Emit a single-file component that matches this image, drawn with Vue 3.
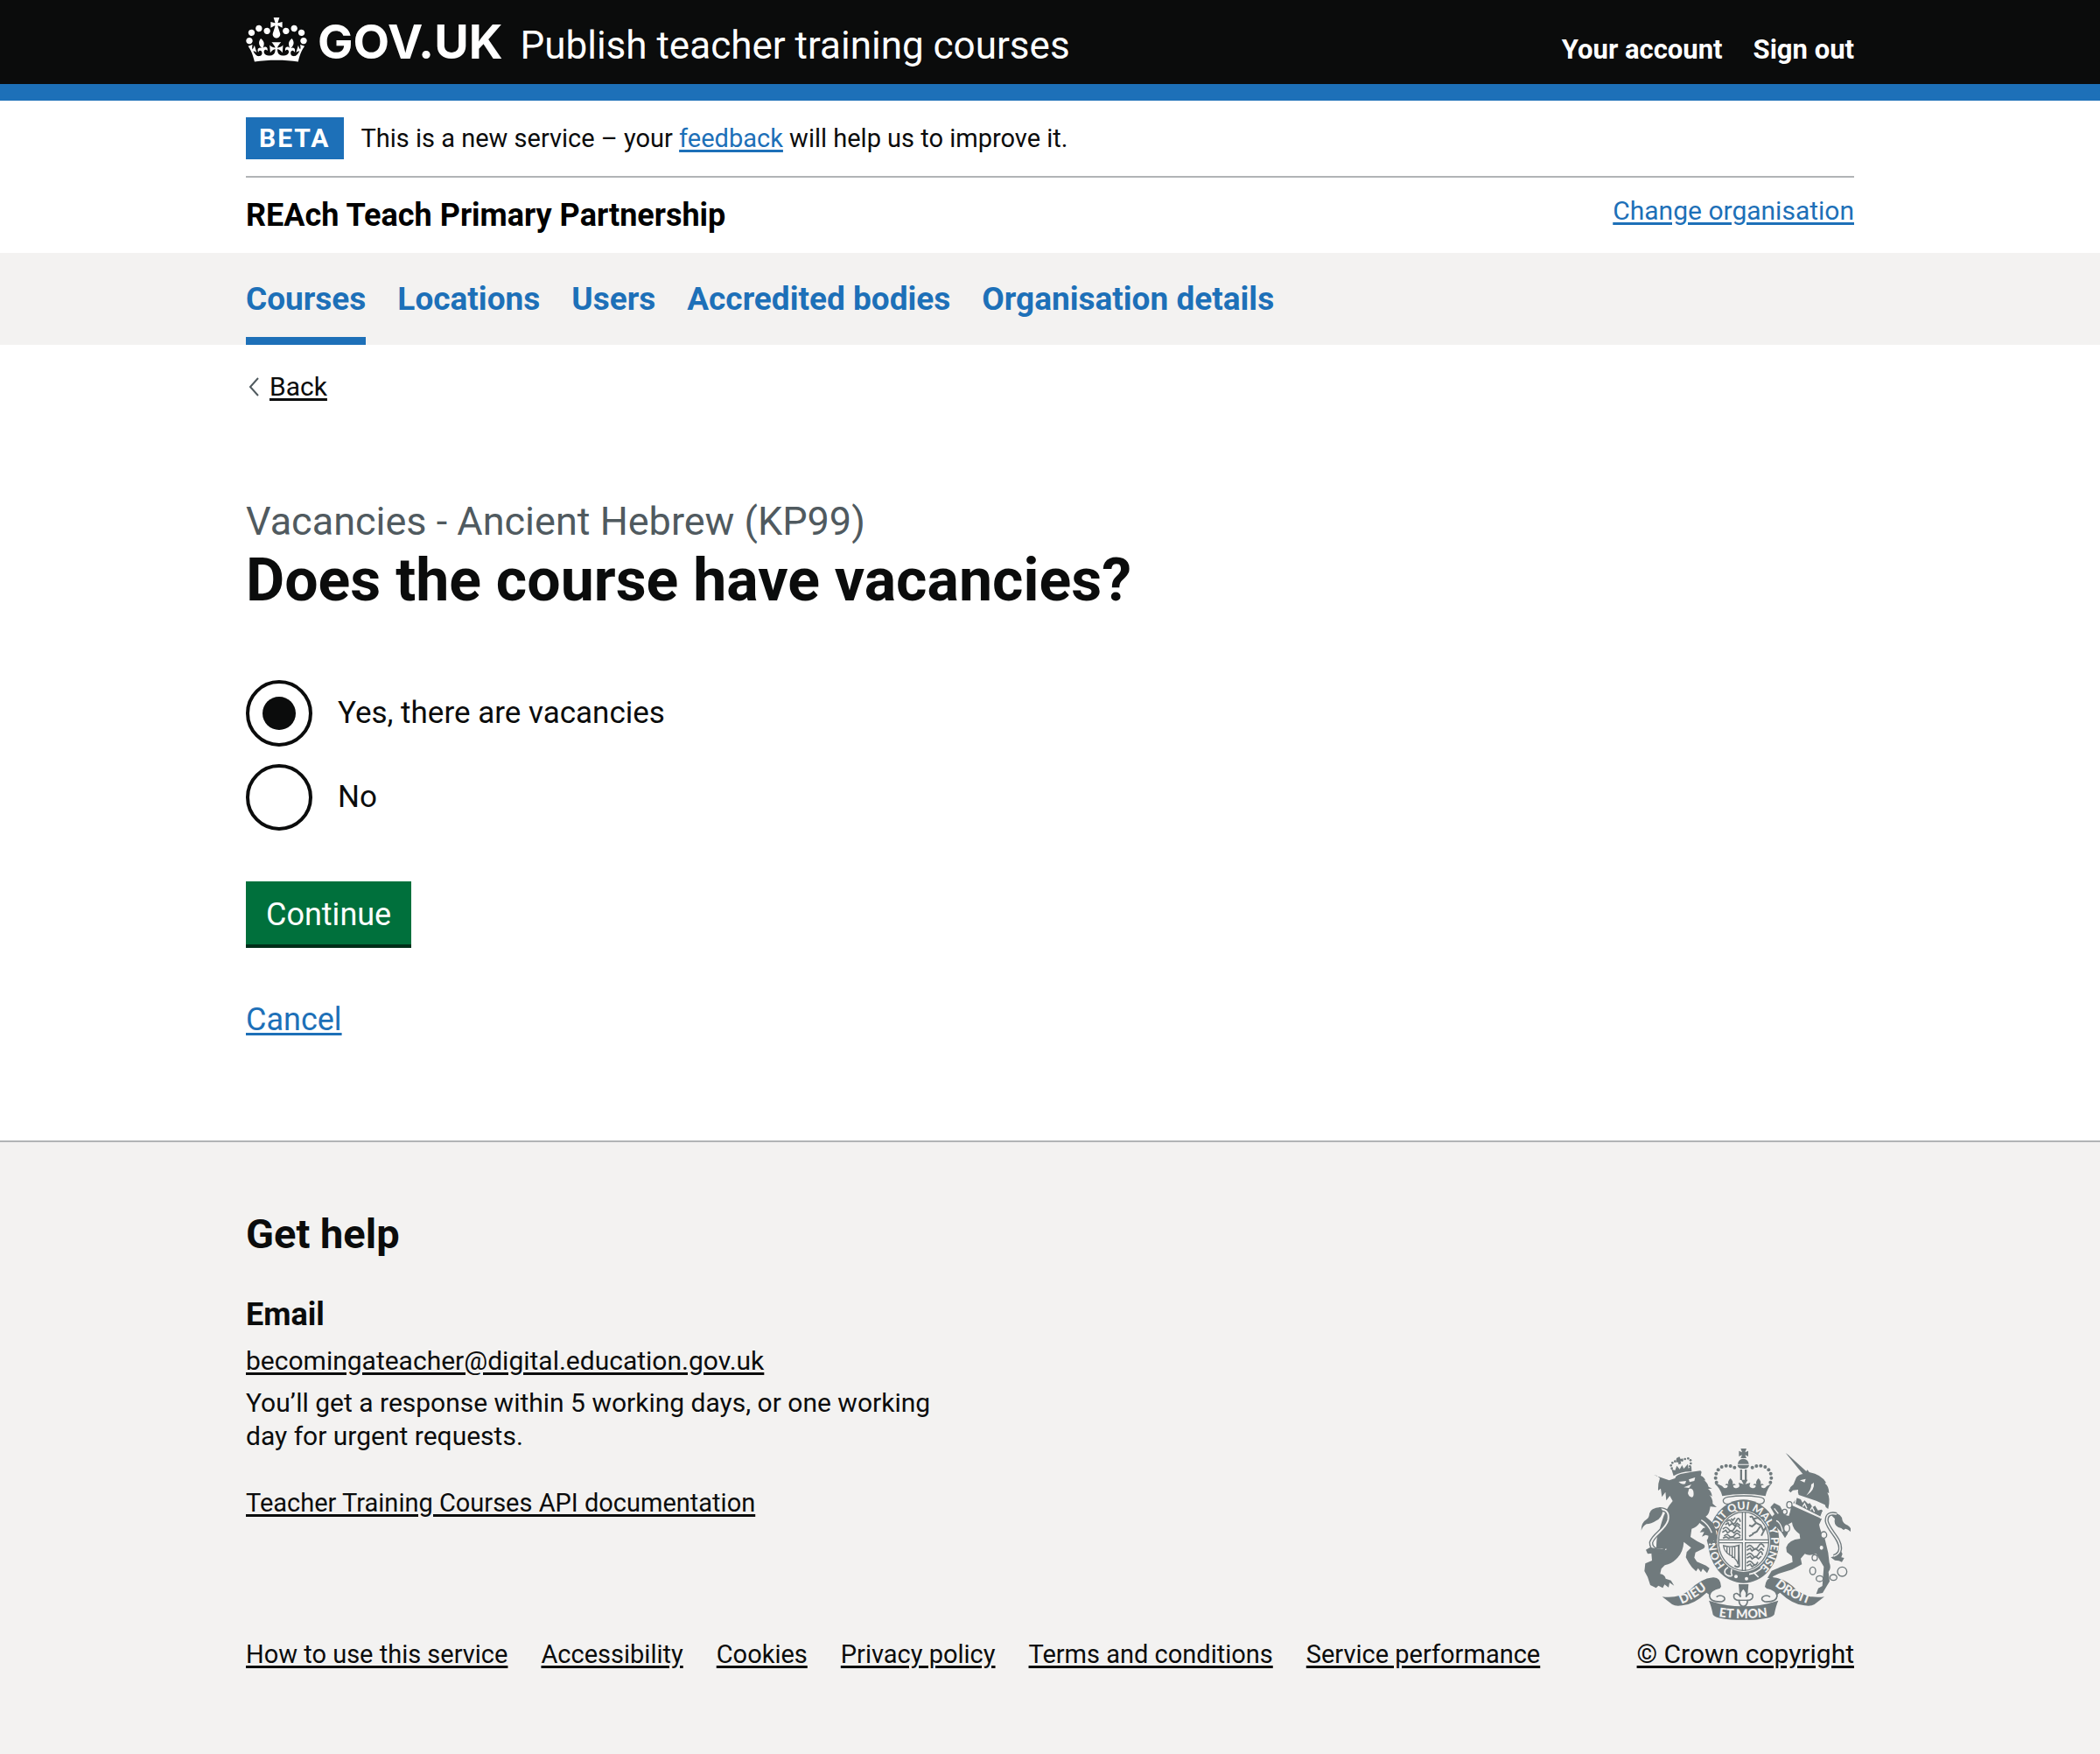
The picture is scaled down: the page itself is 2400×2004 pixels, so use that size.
<script setup>
import { ref } from 'vue'

const vacancies = ref('yes')

const navigation = [
  { label: 'Courses', current: true },
  { label: 'Locations', current: false },
  { label: 'Users', current: false },
  { label: 'Accredited bodies', current: false },
  { label: 'Organisation details', current: false },
]

const footerLinks = [
  'How to use this service',
  'Accessibility',
  'Cookies',
  'Privacy policy',
  'Terms and conditions',
  'Service performance',
]

const crownPearls = [
  [300, 161], [297, 146], [299, 131], [306, 118], [318, 108], [333, 104], [348, 105], [362, 110],
  [485, 161], [488, 146], [486, 131], [479, 118], [467, 108], [452, 104], [437, 105], [423, 110],
]

const lionCrownPearls = [
  [147, 113], [144, 103], [149, 94], [158, 89], [167, 88], [182, 85], [192, 81], [203, 79], [211, 85], [212, 96], [209, 106],
]

const chainLinks = [
  [550, 238, 9, 11], [534, 262, 8, 9], [541, 318, 10, 13], [668, 341, 10, 11], [660, 385, 8, 9], [637, 419, 9, 10],
  [630, 464, 10, 13], [654, 491, 12, 10], [701, 487, 12, 10], [731, 467, 16, 16],
]
</script>

<template>
  <div class="page">
    <header class="header">
      <div class="container header-row">
        <a class="logo" href="#">
          <svg class="crown" viewBox="0 0 132 97" aria-hidden="true">
            <path fill="currentColor" fill-rule="evenodd" d="M25 30.2c3.5 1.5 7.7-.2 9.1-3.7 1.5-3.6-.2-7.8-3.9-9.2-3.6-1.4-7.6.3-9.1 3.9-1.4 3.5.3 7.5 3.9 9zM9 39.5c3.6 1.5 7.8-.2 9.2-3.7 1.5-3.6-.2-7.8-3.9-9.1-3.6-1.5-7.6.2-9.1 3.8-1.4 3.5.3 7.5 3.8 9zM4.4 57.2c3.5 1.5 7.7-.2 9.1-3.8 1.5-3.6-.2-7.7-3.9-9.1-3.5-1.5-7.6.3-9.1 3.8-1.4 3.5.3 7.6 3.9 9.1zm38.3-21.4c3.5 1.5 7.7-.2 9.1-3.8 1.5-3.6-.2-7.7-3.9-9.1-3.6-1.5-7.6.3-9.1 3.8-1.3 3.6.4 7.7 3.9 9.1zm64.4-5.6c-3.6 1.5-7.8-.2-9.1-3.7-1.5-3.6.2-7.8 3.8-9.2 3.6-1.4 7.7.3 9.2 3.9 1.3 3.5-.4 7.5-3.9 9zm15.9 9.3c-3.6 1.5-7.7-.2-9.1-3.7-1.5-3.6.2-7.8 3.7-9.1 3.6-1.5 7.7.2 9.2 3.8 1.5 3.5-.3 7.5-3.8 9zm4.7 17.7c-3.6 1.5-7.8-.2-9.2-3.8-1.5-3.6.2-7.7 3.9-9.1 3.6-1.5 7.7.3 9.2 3.8 1.3 3.5-.4 7.6-3.9 9.1zM89.3 35.8c-3.6 1.5-7.8-.2-9.2-3.8-1.4-3.6.2-7.7 3.9-9.1 3.6-1.5 7.7.3 9.2 3.8 1.4 3.6-.3 7.7-3.9 9.1zM69.7 17.7l8.9 4.7V9.3l-8.9 2.8c-.2-.3-.5-.6-.9-.9L72.4 0H59.6l3.5 11.2c-.3.3-.6.5-.9.9l-8.8-2.8v13.1l8.8-4.7c.3.3.6.7.9.9l-5 15.4v.1c-.2.8-.4 1.6-.4 2.4 0 4.1 3.1 7.5 7 8.1h.2c.3 0 .7.1 1 .1.4 0 .7 0 1-.1h.2c4-.6 7.1-4.1 7.1-8.1 0-.8-.1-1.7-.4-2.4V34l-5.1-15.4c.4-.2.7-.6 1-.9zM66 92.8c16.9 0 32.8 1.1 47.1 3.2 4-16.9 8.9-26.7 14-33.5l-9.6-3.4c1 4.9 1.1 7.2 0 10.2-1.5-1.4-3-4.3-4.2-8.7L108.6 76c2.8-2 5-3.2 7.5-3.3-4.4 9.4-10 11.9-13.6 11.2-4.3-.8-6.3-4.6-5.6-7.9 1-4.7 5.7-5.9 8-.5 4.3-8.7-3-11.4-7.6-8.8 7.1-7.2 7.9-13.5 2.1-21.1-8 6.1-8.1 12.3-4.5 20.8-4.7-5.4-12.1-2.5-9.5 6.2 3.4-5.2 7.9-2 7.2 3.1-.6 4.3-6.4 7.8-13.5 7.2-10.3-.9-10.9-8-11.2-13.8 2.5-.5 7.1 1.8 11 7.3L80.2 60c-4.1 4.4-8 5.3-12.3 5.4 1.4-4.4 8-11.6 8-11.6H55.5s6.4 7.2 7.9 11.6c-4.2-.1-8-1-12.3-5.4l1.4 16.4c3.9-5.5 8.5-7.7 10.9-7.3-.3 5.8-.9 12.8-11.1 13.8-7.2.6-12.9-2.9-13.5-7.2-.7-5 3.8-8.3 7.1-3.1 2.7-8.7-4.6-11.6-9.4-6.2 3.7-8.5 3.6-14.7-4.6-20.8-5.8 7.6-5 13.9 2.2 21.1-4.7-2.6-11.9.1-7.7 8.8 2.3-5.5 7.1-4.2 8.1.5.7 3.3-1.3 7.1-5.7 7.9-3.5.7-9-1.8-13.5-11.2 2.5.1 4.7 1.3 7.5 3.3l-4.7-15.4c-1.2 4.4-2.7 7.2-4.3 8.7-1.1-3-.9-5.3 0-10.2l-9.5 3.4c5 6.9 9.9 16.7 14 33.5 14.8-2.1 30.8-3.2 47.7-3.2z" />
          </svg>
          <span class="logo-text">GOV.UK</span>
        </a>
        <a class="service-name" href="#">Publish teacher training courses</a>
        <nav class="account" aria-label="Account">
          <a href="#">Your account</a>
          <a href="#">Sign out</a>
        </nav>
      </div>
    </header>

    <div class="container">
      <div class="phase-banner">
        <strong class="tag">BETA</strong>
        <span class="phase-text">This is a new service – your <a class="link" href="#">feedback</a> will help us to improve it.</span>
      </div>
      <div class="organisation">
        <span class="organisation-name">REAch Teach Primary Partnership</span>
        <a class="link organisation-change" href="#">Change organisation</a>
      </div>
    </div>

    <nav class="primary-nav" aria-label="Primary">
      <ul class="container nav-list">
        <li v-for="item in navigation" :key="item.label">
          <a class="nav-link" :class="{ current: item.current }" :aria-current="item.current ? 'page' : null" href="#">{{ item.label }}</a>
        </li>
      </ul>
    </nav>

    <div class="container">
      <a class="back" href="#">
        <svg class="back-arrow" viewBox="0 0 12 22" aria-hidden="true">
          <path d="M11 1 2 11l9 10" fill="none" stroke="#505a5f" stroke-width="2" />
        </svg>
        <span>Back</span>
      </a>

      <main class="main">
        <form @submit.prevent>
          <fieldset class="fieldset">
            <legend>
              <span class="caption">Vacancies - Ancient Hebrew (KP99)</span>
              <h1 class="heading">Does the course have vacancies?</h1>
            </legend>
            <div class="radios">
              <div class="radio">
                <input id="vacancies-yes" v-model="vacancies" type="radio" name="vacancies" value="yes">
                <label for="vacancies-yes">Yes, there are vacancies</label>
              </div>
              <div class="radio">
                <input id="vacancies-no" v-model="vacancies" type="radio" name="vacancies" value="no">
                <label for="vacancies-no">No</label>
              </div>
            </div>
          </fieldset>
          <button class="button" type="submit">Continue</button>
        </form>
        <p class="cancel"><a class="link" href="#">Cancel</a></p>
      </main>
    </div>

    <footer class="footer">
      <div class="container footer-row">
        <div class="footer-main">
          <h2 class="footer-title">Get help</h2>
          <h3 class="footer-subtitle">Email</h3>
          <ul class="help-list">
            <li><a href="#">becomingateacher@digital.education.gov.uk</a></li>
            <li>You’ll get a response within 5 working days, or one working day for urgent requests.</li>
          </ul>
          <p class="api-link"><a href="#">Teacher Training Courses API documentation</a></p>
          <ul class="footer-links">
            <li v-for="label in footerLinks" :key="label"><a href="#">{{ label }}</a></li>
          </ul>
        </div>

        <a class="copyright" href="#">
          <svg class="crest" viewBox="40 42 720 594" aria-hidden="true">
            <defs>
              <path id="garter" d="M330 445A94 110 0 1 1 456 445" />
              <path id="motto-left" d="M180 578Q232 558 278 516" />
              <path id="motto-mid" d="M308 621Q392 634 482 619" />
              <path id="motto-right" d="M500 514Q546 556 624 580" />
            </defs>

            <!-- crown -->
            <g class="ink">
              <path d="M383 45h20l-5 13 11-5v19l-11-5 5 11h-20l5-11-11 5V53l11 5zM373 98q2-17 19-18 17 1 19 18zM372 101h40q-2 13-16 13h-8q-14 0-16-13zM381 117h7v36h-7zM397 117h7v36h-7z" />
              <circle v-for="([x, y], i) in crownPearls" :key="i" :cx="x" :cy="y" r="6" />
              <path d="M303 166l16 7q6 8 12 8 8-1 8-8-3-4-9-2 1-7 11-4-4-9 7-20 11 11 7 20 10-3 11 4-6-2-9 2 2 8 12 8 7-1 10-7l-3-12 17 5-8-15h22l-8 15 17-5-3 12q3 6 10 7 10 0 12-8-3-4-9-2 1-7 11-4-4-9 7-20 11 11 7 20 10-3 11 4-6-2-9 2 0 7 8 8 6 0 12-8l16-7q-15 16-21 42-74-14-148 0-6-26-26-42z" />
              <path d="M340 211q53-8 106 0 20 3 18 14-3 11-20 10-51-12-102 0-17 1-19-10-1-11 17-14z" fill="#f3f2f1" stroke="#707a7d" stroke-width="4" />
            </g>

            <!-- garter and shield -->
            <ellipse class="ink" cx="393" cy="363" rx="122" ry="143" />
            <ellipse class="paper" cx="393" cy="363" rx="91" ry="105" />
            <ellipse class="ink-line" cx="393" cy="363" rx="86" ry="100" stroke-width="4" />
            <path class="ink-line" stroke-width="4" d="M389 264v94H308M399 264v94h80M389 464v-96H308M399 464v-96h80" />
            <g class="ink-line" stroke-width="5">
              <path d="M334 297q10-14 18 0t16-4 14 3M330 306l10-6 4 9 10-7 9 8 8-9 10 8M350 285l6 6 8-9M322 322q10-14 20 0t20-4 20 3M320 332l12-7 6 9 12-8 10 8 10-9 12 8M326 346q8-12 18-1t18-3 20 3M322 352l12-4 8 5 12-6 10 6 18-4" />
              <path d="M404 384q10-14 20 0t20-4 20 3M404 394l12-7 6 9 12-8 10 8 10-9 8 8M404 411q10-14 20 0t20-4 14 3M404 421l12-7 6 9 12-8 10 8 10-9M404 438q10-14 20 0t18-4M404 448l12-7 6 9 12-8" />
            </g>
            <path class="ink-line" stroke-width="6" d="M414 280q10-6 12 6l10 14 16 8 10 20-8 16M436 300l-14 12-10-4M450 312l-12 18-16 8M428 286l14-4 10 8M462 328l8-14M412 346l14-8" />
            <path class="ink-line" stroke-width="4" d="M324 378q26 8 54-2l-4 66q-4-20-28-32-20-12-22-32zM336 384v20M345 384v28M354 384v36M363 382v44" />
            <path class="ink-line" stroke-width="6" d="M376 376l2 72q-8 6-16-2" />
            <circle class="paper" cx="367" cy="484" r="6" />
            <circle class="paper" cx="403" cy="491" r="6" />
            <path class="paper-line" stroke-width="5" d="M340 452q-16 8-10 22 8 10 22 8M352 458q-4 12 2 24M412 476q26-4 46-24M430 472l14 14" />
            <text class="motto" font-size="37"><textPath href="#garter">HONI SOIT QUI MAL Y PENSE</textPath></text>

            <!-- lion -->
            <g class="ink">
              <circle v-for="([x, y], i) in lionCrownPearls" :key="i" :cx="x" :cy="y" r="4" />
              <path d="M163 78l10-5 4 8 8-2v10l-8-1 2 9-9 3-1-9-7 1v-9zM146 116l12 4 6-16 10 12 8-14 6 12 14-16 2 15 10-7 1 18q-32-2-62 15z" />
              <path d="M138 154l20-7q4-14 32-17 30-6 55-9l4 4-3 13q14 6 16 17l-6-2q14 9 17 23l12 6-14 1q12 8 14 26l-9-5q12 13 11 30l14 12-22-2-3 14q-3 14-13 20l25 22 9 22 5 28-4 26-8-16-6 15-8-8-4 12-5-20 9-14-13-4-13 6 8-16-15 1 11-14 8-2-20-16q-8 14-27 20l-4 28q22 16 46 26 6 6 0 13l-29 14-4 18 9 14 31 13 12 9-8 17-15-15-6 12-10-14-7 11-14-14-10-14-11-20 3-18 15-15-25-20q-2 36-25 58-18 18-40 22l-12 12-4 18q16 2 19 16l18 6 11 18-16-10-3 16-14-10-6 12-15-8-8 8-20-10-9-28-11-20 3-26 23-10-2-24 17-20q-1-34 10-60l9-30q12-42 37-70l-10-18-12 16-3-29-12 17-4-29-9 7q-1-24 6-42l-10-9-11-2z" />
            </g>
            <path class="paper" d="M170 159l26-3-3 10q-12 4-23-7zM205 151l22-7-3 12-16 4zM206 183q11-4 15 9 3 20-6 20-10-2-13-14zM188 178l26-10-8 12z" />
            <path class="paper-line" stroke-width="4" d="M248 290q26 16 36 44" />
            <path class="ink-line" stroke-width="14" d="M104 253q38 0 30 38c-10 34-48 46-58 76q0 34 52 22" />
            <path class="paper-line" stroke-width="6" d="M104 253q38 0 30 38c-10 34-48 46-58 76q0 34 52 22" />
            <path class="ink" d="M42 326q0-28 18-38 10-6 10-20 4-20 38-22l8 14q-4 22-22 32-18 12-34 12-12 6-18 22zM58 392l14-8 40 6 18-8-12 20-18 2-20 10 4-10-20 2z" />

            <!-- unicorn -->
            <g class="ink">
              <path d="M537 60l9 7 66 60-12 10z" />
              <path d="M550 186q2-10 14-18l10-24q10-12 26-12l12-14 6 8q42 8 58 36l-4 2q14 10 14 34l-6-2q12 20 3 56l-8-6-3-8-30-14-60-20q-4-10-2-18l-18 2-8 8-7-8 8-6z" />
              <path d="M575 214l14 5 6 12 7-8 12 12 6-3 10 14 8-5 10 16 12-3 4 4-5 24-96-50zM559 240l102 46-9 20q4 24 19 46l12 50 4 34q8 20-3 32l4 32-24 40-22 4 7-20 14-8 5-66-26-44q-26 8-39 0l-14 16 4 20-34 18-46 14-20 10 4 8-22-4 14-24 38-16 34-14-2-20-18-14-2-16q8-26 48-30l-2-16q-24-16-26-40l-22 12 8 26-10 16-12-20-30-30-4-22 10-10-14-24 13-14 20 10 16 30 14 4q6-16 8-34z" />
              <path d="M760 330q-20-16-22-6-4 0-10-6-28-6-22-32l-12-12 6-8q30 0 32 26 4 12 18 16 14 8 10 22zM692 418l20-6 14-16 6 10-4 12 10 2-8 14-10-4-14-2z" />
            </g>
            <path class="ink-line" stroke-width="13" d="M712 270q-36-8-34 24c6 32 50 62 46 96q-2 18-22 24" />
            <path class="paper-line" stroke-width="5" d="M712 270q-36-8-34 24c6 32 50 62 46 96q-2 18-22 24" />
            <path class="paper" d="M586 154l20-5-4 12zM634 162q4 26-26 44 18-22 17-38z" />
            <path class="paper-line" stroke-width="4" d="M569 236l92 46M574 212l-6 26M664 262l-8 22M596 244l6-10 8 16M622 256l6-10 8 16" />
            <path class="paper-line" stroke-width="4" d="M505 292q16 6 22 38M498 250l14 18" />
            <g class="chain">
              <ellipse v-for="([x, y, rx, ry], i) in chainLinks" :key="i" :cx="x" :cy="y" :rx="rx" :ry="ry" />
            </g>

            <!-- scroll -->
            <g class="ink">
              <path d="M114 553q56 8 96-24 36-38 78-42 26-2 28 32l-34 32-16-12q-42 40-84 44-22 4-34-4zM670 553q-56 8-96-24-36-38-78-42-26-2-30 32l36 32 16-12q42 40 84 44 22 4 34-4z" />
              <path d="M274 566q118 40 238 0-8 18-14 48-14 18-106 18t-104-18q-6-30-14-48z" />
              <path d="M376 510h34l-3 34h-28z" />
            </g>
            <path d="M312 522q-36 8-36 28 2 22 42 20 16-6 8-16-14-10-26 0M472 522q36 8 36 28-2 22-42 20-16-6-8-16 14-10 26 0" fill="#f3f2f1" stroke="#707a7d" stroke-width="5" />
            <path d="M392 524q16 14 9 30 12-20 23-8 4 18-18 20v6q-4 14-14 14t-14-14v-6q-22-2-18-20 11-12 23 8-7-16 9-30z" fill="#f3f2f1" stroke="#707a7d" stroke-width="5" />
            <path class="ink-line" stroke-width="4" d="M376 565h32" />
            <g class="motto" font-size="43">
              <text><textPath href="#motto-left">DIEU</textPath></text>
              <text><textPath href="#motto-mid">ET MON</textPath></text>
              <text><textPath href="#motto-right">DROIT</textPath></text>
            </g>
          </svg>
          <span>© Crown copyright</span>
        </a>
      </div>
    </footer>
  </div>
</template>

<style>
html {
  background: #f3f2f1;
}

body {
  margin: 0;
}
</style>

<style scoped>
.page {
  background: #fff;
  color: #0b0c0c;
  font-family: Roboto, "Liberation Sans", sans-serif;
  font-size: 30px;
  line-height: 38px;
}

.container {
  box-sizing: border-box;
  width: calc(100% - 60px);
  max-width: 1838px;
  margin: 0 auto;
}

ul {
  margin: 0;
  padding: 0;
  list-style: none;
}

a {
  color: inherit;
  text-decoration-thickness: 3px;
  text-underline-offset: 3px;
}

.link {
  color: #1d70b8;
}

.header {
  background: #0b0c0c;
  border-bottom: 19px solid #1d70b8;
  color: #fff;
}

.header-row {
  display: flex;
  align-items: baseline;
  padding: 20px 0 11px;
  line-height: 56px;
}

.header a {
  text-decoration: none;
}

.logo {
  display: flex;
  align-items: flex-start;
  gap: 12px;
}

.crown {
  width: 70px;
  height: 51px;
}

.logo-text {
  align-self: baseline;
  font-family: Inter, "Liberation Sans", sans-serif;
  font-size: 54px;
  font-weight: 700;
}

.service-name {
  margin-left: 20px;
  font-size: 44px;
}

.account {
  display: flex;
  gap: 35px;
  margin-left: auto;
  font-size: 31px;
  font-weight: 700;
}

.phase-banner {
  display: flex;
  align-items: center;
  gap: 20px;
  padding: 19px 0;
  border-bottom: 2px solid #b1b4b6;
}

.phase-text {
  font-size: 29px;
}

.tag {
  padding: 5px 15px;
  background: #1d70b8;
  color: #fff;
  letter-spacing: 2px;
}

.organisation {
  display: flex;
  justify-content: space-between;
  padding: 23px 0;
}

.organisation-name {
  color: #000;
  font-size: 36px;
  font-weight: 700;
  line-height: 40px;
}

.organisation-change {
  line-height: 30px;
}

.primary-nav {
  background: #f3f2f1;
}

.nav-list {
  display: flex;
  gap: 36px;
}

.nav-link {
  display: block;
  padding: 33px 0 23px;
  border-bottom: 9px solid transparent;
  color: #1d70b8;
  font-size: 37px;
  font-weight: 700;
  line-height: 40px;
  text-decoration: none;
}

.nav-link.current {
  border-color: #1d70b8;
}

.back {
  display: inline-flex;
  align-items: center;
  gap: 12px;
  margin-top: 29px;
  padding-left: 3px;
  text-decoration: none;
}

.back span {
  text-decoration: underline 3px;
  text-underline-offset: 3px;
}

.back-arrow {
  width: 12px;
  height: 22px;
}

.main {
  padding: 105px 0 114px;
}

.fieldset {
  margin: 0;
  padding: 0;
  border: 0;
}

.fieldset legend {
  padding: 0;
}

.caption {
  display: block;
  color: #505a5f;
  font-size: 45px;
  line-height: 58px;
}

.heading {
  margin: 0;
  font-size: 68px;
  font-weight: 700;
  line-height: 76px;
}

.radios {
  display: flex;
  flex-direction: column;
  gap: 20px;
  margin: 76px 0 58px;
  font-size: 35px;
  line-height: 48px;
}

.radio {
  display: flex;
  align-items: center;
  gap: 29px;
}

.radio input {
  display: grid;
  place-content: center;
  width: 76px;
  height: 76px;
  margin: 0;
  border: 4px solid #0b0c0c;
  border-radius: 50%;
  appearance: none;
}

.radio input:checked::before {
  width: 38px;
  height: 38px;
  border-radius: 50%;
  background: #0b0c0c;
  content: "";
}

.button {
  padding: 12px 23px;
  border: 0;
  background: #00703c;
  box-shadow: inset 0 -4px 0 #002d18;
  color: #fff;
  font-family: inherit;
  font-size: 36px;
  line-height: 52px;
}

.cancel {
  margin: 58px 0 0;
  font-size: 36px;
  line-height: 48px;
}

.footer {
  border-top: 2px solid #b1b4b6;
  background: #f3f2f1;
}

.footer-row {
  display: flex;
  align-items: flex-end;
  justify-content: space-between;
  padding: 76px 0 95px;
}

.footer-title,
.footer-subtitle {
  margin: 0;
  font-weight: 700;
}

.footer-title {
  font-size: 47px;
  line-height: 58px;
}

.footer-subtitle {
  margin: 39px 0 10px;
  font-size: 36px;
  line-height: 48px;
}

.help-list {
  display: flex;
  flex-direction: column;
  gap: 10px;
  max-width: 800px;
}

.api-link {
  margin: 38px 0 135px;
  font-size: 29px;
}

.footer-links {
  display: flex;
  flex-wrap: wrap;
  gap: 10px 38px;
  font-size: 29px;
}

.copyright {
  display: flex;
  flex-direction: column;
  align-items: center;
  gap: 19px;
  white-space: nowrap;
}

.crest {
  width: 240px;
  height: 198px;
}

.ink {
  fill: #707a7d;
}

.paper {
  fill: #f3f2f1;
}

.ink-line {
  fill: none;
  stroke: #707a7d;
}

.paper-line {
  fill: none;
  stroke: #f3f2f1;
}

.chain {
  fill: #f3f2f1;
  stroke: #707a7d;
  stroke-width: 4px;
}

.motto {
  fill: #f3f2f1;
  font-family: Lato, sans-serif;
  font-weight: 900;
}
</style>
